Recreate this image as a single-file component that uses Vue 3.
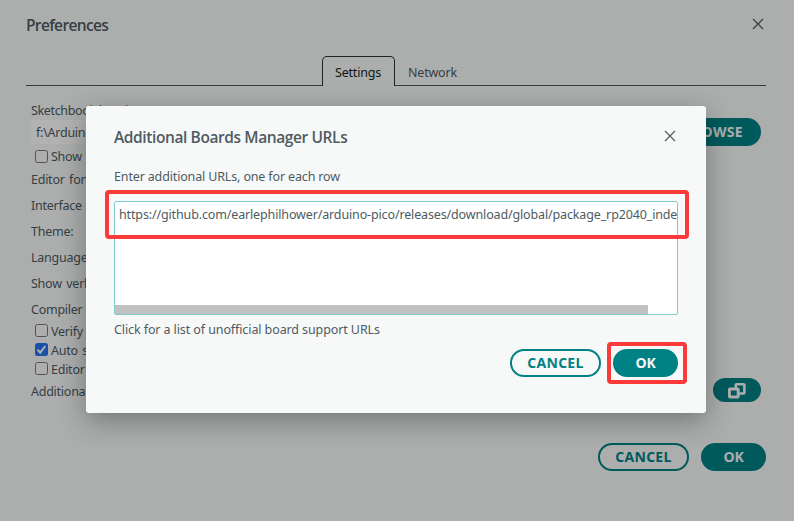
<script setup>
const settings = [
  { label: 'Editor font size:' },
  { label: 'Interface scale:' },
  { label: 'Theme:' },
  { label: 'Language:' },
  { label: 'Show verbose output' },
  { label: 'Compiler warnings' },
]
const checks = [
  { label: 'Verify code', on: false },
  { label: 'Auto save', on: true },
  { label: 'Editor Quick', on: false },
]
</script>

<template>
  <div class="screen">
    <section class="prefs">
      <header class="head">
        <h1>Preferences</h1>
        <svg class="x" viewBox="0 0 12 12"><path d="M1 1 11 11M11 1 1 11" /></svg>
      </header>
      <nav class="tabs">
        <span class="tab active">Settings</span>
        <span class="tab">Network</span>
      </nav>
      <div class="body">
        <div class="row first">Sketchbook location:</div>
        <div class="path-row">
          <div class="path">f:\Arduino</div>
          <button class="btn solid">BROWSE</button>
        </div>
        <div class="check show"><i class="box"></i><span>Show files</span></div>
        <div v-for="s in settings" :key="s.label" class="row">{{ s.label }}</div>
        <div class="checks">
          <div v-for="c in checks" :key="c.label" class="check">
            <i class="box" :class="{ on: c.on }">
              <svg v-if="c.on" viewBox="0 0 13 13"><path d="M2.6 6.8 5.2 9.6 10.3 3" /></svg>
            </i>
            <span>{{ c.label }}</span>
          </div>
        </div>
        <div class="urls">
          <span class="urls-label">Additional boards</span>
          <button class="btn solid icon">
            <svg viewBox="0 0 18 18">
              <rect x="7.8" y="3.2" width="8.6" height="9.3" rx="0.8" />
              <rect class="front" x="1.4" y="8" width="8.8" height="8" rx="0.8" />
            </svg>
          </button>
        </div>
      </div>
      <footer class="actions">
        <button class="btn outline">CANCEL</button>
        <button class="btn solid ok">OK</button>
      </footer>
    </section>

    <div class="overlay">
      <section class="modal">
        <header class="mhead">
          <h2>Additional Boards Manager URLs</h2>
          <svg class="x" viewBox="0 0 12 12"><path d="M1 1 11 11M11 1 1 11" /></svg>
        </header>
        <p class="hint">Enter additional URLs, one for each row</p>
        <div class="area">
          <div class="url">https://github.com/earlephilhower/arduino-pico/releases/download/global/package_rp2040_inde</div>
          <div class="scroll"></div>
          <div class="mark mark-url"></div>
        </div>
        <p class="link">Click for a list of unofficial board support URLs</p>
        <footer class="mactions">
          <button class="btn outline">CANCEL</button>
          <div class="ok-wrap">
            <button class="btn solid ok">OK</button>
            <div class="mark mark-ok"></div>
          </div>
        </footer>
      </section>
    </div>
  </div>
</template>

<style>
body { margin: 0; overflow: hidden; }
</style>

<style scoped>
* { box-sizing: border-box; }
.screen {
  position: relative;
  width: 794px;
  height: 521px;
  overflow: hidden;
  background: #f7f9f9;
  color: #4e5b61;
  font: 12.5px/20px "Noto Sans", "Open Sans", sans-serif;
  letter-spacing: -0.25px;
  white-space: nowrap;
}
h1, h2, p { margin: 0; }
h1, h2 {
  font-family: "Open Sans", sans-serif;
  font-size: 15.5px;
  font-weight: 600;
  line-height: 20px;
  letter-spacing: -0.4px;
}
h1 { letter-spacing: -0.66px; }
.prefs { padding: 15px 28px 0 26px; }
.head { display: flex; justify-content: space-between; height: 41px; }
.x { width: 12px; height: 12px; margin: 3px 2px 0 0; fill: none; stroke: #4e5b61; stroke-width: 1.2; }
.tabs {
  display: flex;
  justify-content: center;
  height: 30px;
  border-bottom: 1px solid #4e5b61;
}
.tab { width: 75px; height: 30px; padding: 7px 0 0 13px; letter-spacing: -0.2px; }
.active {
  width: 73px;
  border: 1px solid #2c353a;
  border-bottom: 0;
  border-radius: 5px 5px 0 0;
  background: #f7f9f9;
  color: #171e21;
  padding: 6px 0 0 12px;
}
.body { padding: 14px 5px 0; word-spacing: 1.5px; }
.row { display: flex; align-items: center; height: 26px; }
.row.first { height: 20px; padding-top: 2px; letter-spacing: -0.35px; word-spacing: 0; }
.path-row { display: flex; justify-content: space-between; align-items: center; height: 24px; }
.path { width: 560px; height: 24px; padding: 3px 5px 0; background: #fff; border-radius: 2px; }
.btn {
  display: flex;
  align-items: center;
  justify-content: center;
  flex: none;
  height: 28px;
  margin: 0;
  padding: 0 16px;
  border: 2px solid #008184;
  border-radius: 14px;
  font: 700 14px/20px "Open Sans", sans-serif;
  letter-spacing: 0.3px;
}
.solid { background: #008184; color: #f7f9f9; }
.outline { width: 91px; background: transparent; color: #008184; padding: 0; }
.ok { width: 65px; padding: 0; letter-spacing: -0.2px; }
.icon { width: 48px; height: 24px; padding: 0; border-radius: 12px; }
.icon svg { width: 18px; height: 18px; fill: none; stroke: #f7f9f9; stroke-width: 2.6; }
.icon .front { stroke-width: 3; fill: #008184; }
.check { display: flex; align-items: center; height: 19px; padding-left: 4px; gap: 3px; }
.check span { padding-top: 2px; }
.show { height: 24px; margin-bottom: -1px; }
.box { width: 13px; height: 13px; border: 1px solid #767676; border-radius: 2.5px; background: #f9f9f9; }
.box.on { border: 0; background: #2375f3; }
.on svg { display: block; width: 13px; height: 13px; fill: none; stroke: #fff; stroke-width: 2; }
.checks { margin-top: -2px; }
.urls { display: flex; justify-content: space-between; align-items: center; height: 24px; }
.urls-label { padding-top: 4px; }
.actions { display: flex; justify-content: flex-end; gap: 12px; margin-top: 41px; }

.overlay { position: absolute; inset: 0; padding: 106px 88px 0 86px; background: rgba(0, 0, 0, 0.3); }
.modal {
  height: 307px;
  padding: 21px 28px 0;
  border-radius: 3px;
  background: #f7f9f9;
  box-shadow: 0 8px 28px rgba(0, 0, 0, 0.32);
}
.mhead { display: flex; justify-content: space-between; height: 39px; }
.hint { padding-top: 1px; letter-spacing: -0.15px; }
.area {
  position: relative;
  display: flex;
  flex-direction: column;
  justify-content: space-between;
  height: 114px;
  margin-top: 14px;
  border: 1px solid #7fcbcd;
  border-radius: 2px;
  background: #fff;
}
.url { padding: 3px 0 0 4px; letter-spacing: -0.14px; }
.scroll { width: 533px; height: 9px; background: #c1c1c1; }
.link { margin-top: 5px; letter-spacing: -0.1px; }
.mactions { display: flex; justify-content: flex-end; gap: 12px; margin-top: 9px; }
.ok-wrap { position: relative; }
.mark { position: absolute; border: 4px solid #fc3a3a; border-radius: 4px; }
.mark-url { left: -10px; top: -12px; width: 584px; height: 49px; }
.mark-ok { left: -6px; top: -7px; width: 80px; height: 42px; }
</style>
